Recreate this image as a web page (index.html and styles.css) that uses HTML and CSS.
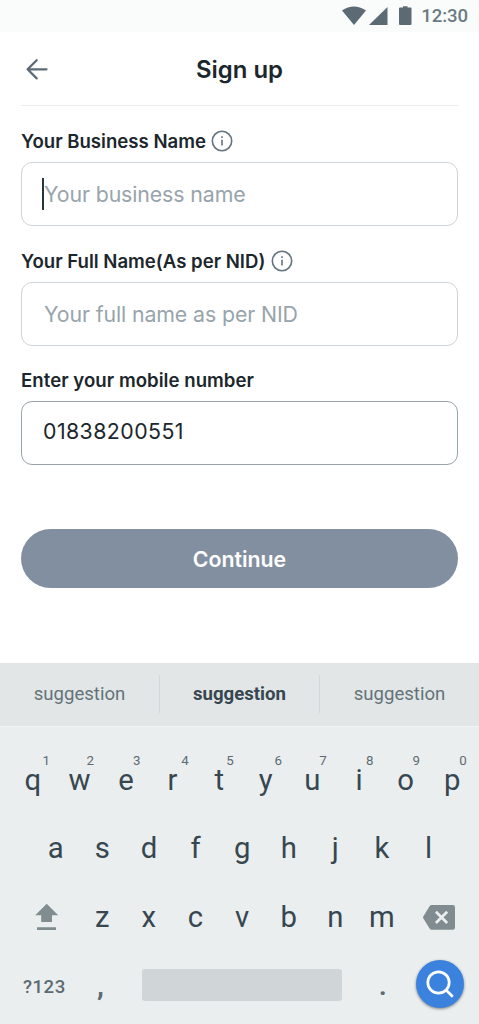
FILE: index.html
```html
<!DOCTYPE html>
<html lang="en">
<head>
<meta charset="utf-8">
<title>Sign up</title>
<link rel="stylesheet" href="styles.css">
</head>
<body>
<div class="screen">
  <div class="status">
    <svg class="status-icons" width="72" height="22" viewBox="0 0 72 22">
      <path d="M0 4.5Q11.7-3.6 24 4.5L12 19Z"/>
      <path d="M45.500 1V19H27Z"/>
      <path d="M57 2.500Q57 1.500 58 1.500H61V.3H65.500V1.500H68.500Q69.500 1.500 69.500 2.500V18Q69.500 19 68.500 19H58Q57 19 57 18Z"/>
    </svg>
    <span class="clock">12:30</span>
  </div>
  <header class="header">
    <svg class="back" width="24" height="24" viewBox="0 0 24 24"><path d="M21.500 11.300H2.600M11.700 2.200L2.600 11.300L11.700 20.400"/></svg>
    <h1 class="title">Sign up</h1>
  </header>
  <form class="form">
    <div class="field">
      <div class="label"><span>Your Business Name</span><svg class="info" width="22" height="22" viewBox="0 0 22 22"><circle cx="11" cy="11" r="9.700"/><path d="M11 9.800V15.500M11 6.300V7.900"/></svg></div>
      <div class="input"><span class="caret"></span><span class="hint">Your business name</span></div>
    </div>
    <div class="field">
      <div class="label label-wide"><span>Your Full Name(As per NID)</span><svg class="info" width="22" height="22" viewBox="0 0 22 22"><circle cx="11" cy="11" r="9.700"/><path d="M11 9.800V15.500M11 6.300V7.900"/></svg></div>
      <div class="input"><span class="hint">Your full name as per NID</span></div>
    </div>
    <div class="field">
      <div class="label label-plain"><span>Enter your mobile number</span></div>
      <div class="input input-filled"><span class="value">01838200551</span></div>
    </div>
    <button class="continue" type="button">Continue</button>
  </form>
  <div class="keyboard">
    <div class="suggestions">
      <div class="suggestion">suggestion</div>
      <div class="suggestion suggestion-main">suggestion</div>
      <div class="suggestion">suggestion</div>
    </div>
    <div class="row row-top">
      <div class="key">q<sup class="num num-wide">1</sup></div>
      <div class="key">w<sup class="num">2</sup></div>
      <div class="key">e<sup class="num">3</sup></div>
      <div class="key">r<sup class="num num-mid">4</sup></div>
      <div class="key">t<sup class="num">5</sup></div>
      <div class="key">y<sup class="num num-mid">6</sup></div>
      <div class="key">u<sup class="num">7</sup></div>
      <div class="key">i<sup class="num">8</sup></div>
      <div class="key">o<sup class="num">9</sup></div>
      <div class="key">p<sup class="num">0</sup></div>
    </div>
    <div class="row row-home">
      <div class="key">a</div><div class="key">s</div><div class="key">d</div><div class="key">f</div><div class="key">g</div><div class="key">h</div><div class="key">j</div><div class="key">k</div><div class="key">l</div>
    </div>
    <div class="row row-low">
      <svg class="shift" width="24" height="28" viewBox="0 0 24 28"><path d="M11.700 .8L23.200 12.300H17V19H6.200V12.300H.2ZM2 24.300H21V27H2Z"/></svg>
      <div class="key">z</div><div class="key">x</div><div class="key">c</div><div class="key">v</div><div class="key">b</div><div class="key">n</div><div class="key">m</div>
      <svg class="erase" width="32" height="25" viewBox="0 0 32 25"><path class="erase-body" d="M8.700 0H29.800Q32 0 32 2.200V22.500Q32 24.700 29.800 24.700H8.700Q7.400 24.700 6.600 23.500L.4 13.500Q-.3 12.350 .4 11.200L6.600 1.200Q7.400 0 8.700 0Z"/><path class="erase-x" d="M12.900 6.700L24.200 18M24.200 6.700L12.900 18"/></svg>
    </div>
    <div class="row row-bottom">
      <div class="symbols">?123</div>
      <div class="comma">,</div>
      <div class="space"></div>
      <div class="dot">.</div>
      <div class="search"><svg width="28" height="28" viewBox="0 0 28 28"><circle cx="12.500" cy="12.500" r="10.700"/><path d="M20 20L26.800 26.800"/></svg></div>
    </div>
  </div>
</div>
</body>
</html>
```
FILE: styles.css
```css
* { box-sizing: border-box; }
body { margin: 0; background: #fff; font-family: Inter, sans-serif; color: #1b272c; }
.screen { width: 479px; height: 1024px; display: flex; flex-direction: column; overflow: hidden; }
.status { height: 32px; background: #fafcfb; display: flex; justify-content: flex-end; align-items: flex-start; padding: 6px 11px 0 0; gap: 7px; }
.status-icons { fill: #5c6b73; }
.clock { font: 500 18.600px/21px Roboto, sans-serif; letter-spacing: -.1px; color: #6b7a82; }
.header { height: 74px; margin: 0 21px; border-bottom: 1px solid #e9ebec; display: grid; grid-template-columns: 24px 1fr 24px; align-items: center; padding: 3px 4px 0; }
.back { fill: none; stroke: #5c6b75; stroke-width: 2.300; stroke-linecap: round; stroke-linejoin: round; }
.title { margin: 0; font-size: 23.900px; line-height: 32px; font-weight: 600; text-align: center; }
.form { padding: 22px 21px 0; height: 557px; display: flex; flex-direction: column; }
.field { height: 119.700px; }
.label { height: 26px; display: flex; align-items: center; gap: 5px; font-size: 18.600px; font-weight: 600; white-space: nowrap; }
.label-wide { gap: 6px; }
.label-plain { letter-spacing: .04px; }
.info { fill: none; stroke: #63727b; stroke-width: 1.600; }
.input { height: 64px; margin-top: 8px; border: 1.400px solid #cdd5d8; border-radius: 11px; display: flex; align-items: center; padding-left: 22px; font-size: 21.300px; position: relative; }
.input-filled { border-color: #98a4ad; }
.hint { color: #98a4ab; letter-spacing: -.1px; }
.value { margin-left: -1px; padding-bottom: 4px; font-weight: 400; letter-spacing: .45px; }
.caret { position: absolute; left: 20px; top: 15px; width: 2px; height: 32px; background: #26343b; }
.continue { margin-top: 42px; height: 59px; flex: none; border: 0; border-radius: 30px; background: #828fa1; color: #fff; font: 600 21.300px Inter, sans-serif; }
.keyboard { flex: 1; background: #eaeeef; font-family: Roboto, sans-serif; color: #37474f; }
.suggestions { height: 63.500px; display: grid; grid-template-columns: 159px 160px 160px; align-items: center; background: #e2e6e7; border-bottom: 1px solid #f1f4f5; }
.suggestion { height: 38px; line-height: 38px; text-align: center; font-size: 18.600px; color: #647379; }
.suggestion + .suggestion { border-left: 1.300px solid #d3d8da; }
.suggestion-main { font-weight: 700; color: #37474f; }
.row { display: flex; align-items: center; }
.key { width: 46.600px; text-align: center; font-size: 29.300px; line-height: 34px; position: relative; }
.num { position: absolute; left: 30.300px; top: -9px; font-size: 13.300px; line-height: 14px; font-weight: 400; color: #5c6b72; }
.num-mid { left: 32px; }
.num-wide { left: 33px; }
.row-top { padding: 36px 0 0 9.500px; }
.row-home { padding: 34px 0 0 32.500px; }
.row-low { padding: 35px 0 0 35px; }
.shift { margin-right: 20px; fill: #808c90; }
.erase { margin: 1px 0 0 18px; }
.erase-body { fill: #808c90; }
.erase-x { stroke: #eaeeef; stroke-width: 2.700; fill: none; }
.row-bottom { padding: 26px 14.500px 0 23px; color: #5c6b70; }
.symbols { width: 74px; padding-top: 6px; font-size: 18.600px; font-weight: 500; letter-spacing: .5px; }
.comma { width: 45px; padding-top: 4px; font-size: 28px; font-weight: 700; }
.space { width: 200px; height: 32px; margin-top: 2px; border-radius: 3px; background: #d0d5d8; }
.dot { width: 74px; padding: 4px 0 0 37px; font-size: 26px; font-weight: 700; }
.search { width: 48px; height: 48px; border-radius: 50%; background: #3b82df; box-shadow: 0 1px 3px rgba(0,0,0,.45); display: flex; align-items: center; justify-content: center; }
.search svg { fill: none; stroke: #fff; stroke-width: 2.700; }
```
